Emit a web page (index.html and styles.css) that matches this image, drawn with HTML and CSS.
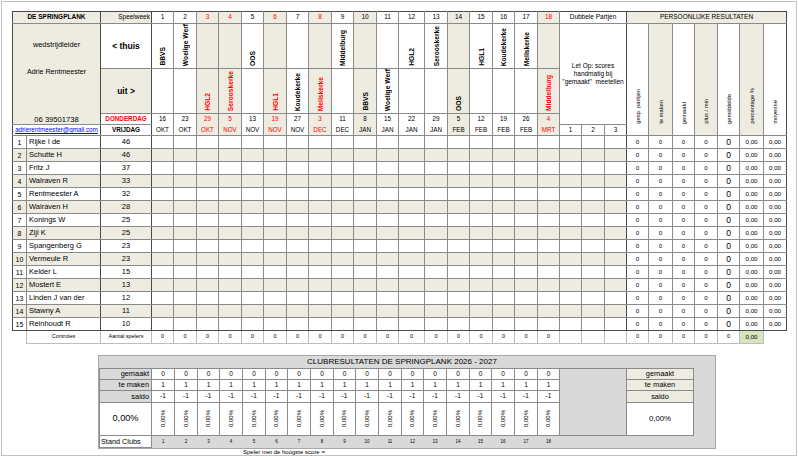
FILE: index.html
```html
<!DOCTYPE html>
<html lang="nl">
<head>
<meta charset="utf-8">
<title>De Springplank</title>
<link rel="stylesheet" href="styles.css">
</head>
<body>
<div class="page">
<table class="main">
<colgroup>
<col class="w14"><col class="w74"><col class="w51">
<col class="w22"><col class="w23"><col class="w22"><col class="w23"><col class="w22"><col class="w23"><col class="w22"><col class="w23"><col class="w22"><col class="w23"><col class="w22"><col class="w26"><col class="w23"><col class="w22"><col class="w23"><col class="w22"><col class="w23"><col class="w22">
<col class="w22"><col class="w23"><col class="w22">
<col class="w22"><col class="w24"><col class="w22"><col class="w23"><col class="w22"><col class="w24"><col class="w23">
</colgroup>
<tr class="h1">
<td colspan="2" class="bg hn lft dkr">DE SPRINGPLANK</td>
<td class="bg sw dkr">Speelweek</td>
<td>1</td><td>2</td><td class="bg rd">3</td><td class="bg rd">4</td><td>5</td><td class="bg rd">6</td><td>7</td><td class="bg rd">8</td><td>9</td><td class="bg">10</td><td>11</td><td>12</td><td>13</td><td class="bg">14</td><td>15</td><td>16</td><td>17</td><td class="bg rd">18</td>
<td colspan="3" class="dh dkr">Dubbele Partjen</td>
<td colspan="7" class="bg ph dkr">PERSOONLIJKE RESULTATEN</td>
</tr>
<tr class="h2">
<td colspan="2" rowspan="3" class="bg lead lft dkr"><div class="lead-in"><span class="l1">wedstrijdleider</span><span class="l2">Adrie Rentmeester</span><span class="l3">06 39501738</span></div></td>
<td class="th dkr">&lt; thuis</td>
<td><div class="vc"><span class="vt">BBVS</span></div></td>
<td><div class="vc"><span class="vt">Woelige Werf</span></div></td>
<td class="bg"></td><td class="bg"></td>
<td><div class="vc"><span class="vt">OOS</span></div></td>
<td class="bg"></td><td></td><td class="bg"></td>
<td><div class="vc"><span class="vt">Middelburg</span></div></td>
<td class="bg"></td><td></td>
<td><div class="vc"><span class="vt">HGL2</span></div></td>
<td><div class="vc"><span class="vt">Serooskerke</span></div></td>
<td class="bg"></td>
<td><div class="vc"><span class="vt">HGL1</span></div></td>
<td><div class="vc"><span class="vt">Koudekerke</span></div></td>
<td><div class="vc"><span class="vt">Meliskerke</span></div></td>
<td class="bg"></td>
<td colspan="3" rowspan="3" class="letop dkr">Let Op: scores<br>handmatig bij<br>"gemaakt"&nbsp; meetellen</td>
<td rowspan="4" class="pv"><div class="vl"><span class="vt2">gesp. partijen</span></div></td>
<td rowspan="4" class="pv bg"><div class="vl"><span class="vt2">te maken</span></div></td>
<td rowspan="4" class="pv"><div class="vl"><span class="vt2">gemaakt</span></div></td>
<td rowspan="4" class="pv bg"><div class="vl"><span class="vt2">plus / min</span></div></td>
<td rowspan="4" class="pv"><div class="vl"><span class="vt2">gemiddelde</span></div></td>
<td rowspan="4" class="pv bg"><div class="vl"><span class="vt2">percentage %</span></div></td>
<td rowspan="4" class="pv dkr"><div class="vl"><span class="vt2">moyenne</span></div></td>
</tr>
<tr class="h3">
<td class="bg ui dkr">uit &gt;</td>
<td></td><td></td>
<td class="bg"><div class="vc"><span class="vt rd">HGL2</span></div></td>
<td class="bg"><div class="vc"><span class="vt rd">Serooskerke</span></div></td>
<td></td>
<td class="bg"><div class="vc"><span class="vt rd">HGL1</span></div></td>
<td><div class="vc"><span class="vt">Koudekerke</span></div></td>
<td class="bg"><div class="vc"><span class="vt rd">Meliskerke</span></div></td>
<td></td>
<td class="bg"><div class="vc"><span class="vt">BBVS</span></div></td>
<td><div class="vc"><span class="vt">Woelige Werf</span></div></td>
<td></td><td></td>
<td class="bg"><div class="vc"><span class="vt">OOS</span></div></td>
<td></td><td></td><td></td>
<td class="bg"><div class="vc"><span class="vt rd">Middelburg</span></div></td>
</tr>
<tr class="h4">
<td class="dd dkr">DONDERDAG</td>
<td class="nb">16</td><td class="nb">23</td><td class="nb bg rd">29</td><td class="nb bg rd">5</td><td class="nb">13</td><td class="nb bg rd">19</td><td class="nb">27</td><td class="nb bg rd">3</td><td class="nb">11</td><td class="nb bg">8</td><td class="nb">15</td><td class="nb">22</td><td class="nb">29</td><td class="nb bg">5</td><td class="nb">12</td><td class="nb">19</td><td class="nb">26</td><td class="nb bg rd">4</td>
</tr>
<tr class="h5">
<td colspan="2" class="mail lft dkr"><span>adrierentmeester@gmail.com</span></td>
<td class="vr dkr">VRIJDAG</td>
<td>OKT</td><td>OKT</td><td class="bg rd">OKT</td><td class="bg rd">NOV</td><td>NOV</td><td class="bg rd">NOV</td><td>NOV</td><td class="bg rd">DEC</td><td>DEC</td><td class="bg">JAN</td><td>JAN</td><td>JAN</td><td>JAN</td><td class="bg">FEB</td><td>FEB</td><td>FEB</td><td>FEB</td><td class="bg rd">MRT</td>
<td class="du">1</td><td class="du">2</td><td class="du dkr">3</td>
</tr>
<tr class="r"><td class="n lft">1</td><td class="nm dkr">Rijke I de</td><td class="sc dkr">46</td><td></td><td></td><td></td><td></td><td></td><td></td><td></td><td></td><td></td><td></td><td></td><td></td><td></td><td></td><td></td><td></td><td></td><td></td><td></td><td></td><td class="dkr"></td><td class="p">0</td><td class="p">0</td><td class="p">0</td><td class="p">0</td><td class="p g">0</td><td class="p">0,00</td><td class="p dkr">0,00</td></tr>
<tr class="r a"><td class="n lft">2</td><td class="nm dkr">Schutte H</td><td class="sc dkr">46</td><td></td><td></td><td></td><td></td><td></td><td></td><td></td><td></td><td></td><td></td><td></td><td></td><td></td><td></td><td></td><td></td><td></td><td></td><td></td><td></td><td class="dkr"></td><td class="p">0</td><td class="p">0</td><td class="p">0</td><td class="p">0</td><td class="p g">0</td><td class="p">0,00</td><td class="p dkr">0,00</td></tr>
<tr class="r"><td class="n lft">3</td><td class="nm dkr">Fritz J</td><td class="sc dkr">37</td><td></td><td></td><td></td><td></td><td></td><td></td><td></td><td></td><td></td><td></td><td></td><td></td><td></td><td></td><td></td><td></td><td></td><td></td><td></td><td></td><td class="dkr"></td><td class="p">0</td><td class="p">0</td><td class="p">0</td><td class="p">0</td><td class="p g">0</td><td class="p">0,00</td><td class="p dkr">0,00</td></tr>
<tr class="r a"><td class="n lft">4</td><td class="nm dkr">Walraven R</td><td class="sc dkr">33</td><td></td><td></td><td></td><td></td><td></td><td></td><td></td><td></td><td></td><td></td><td></td><td></td><td></td><td></td><td></td><td></td><td></td><td></td><td></td><td></td><td class="dkr"></td><td class="p">0</td><td class="p">0</td><td class="p">0</td><td class="p">0</td><td class="p g">0</td><td class="p">0,00</td><td class="p dkr">0,00</td></tr>
<tr class="r"><td class="n lft">5</td><td class="nm dkr">Rentmeester A</td><td class="sc dkr">32</td><td></td><td></td><td></td><td></td><td></td><td></td><td></td><td></td><td></td><td></td><td></td><td></td><td></td><td></td><td></td><td></td><td></td><td></td><td></td><td></td><td class="dkr"></td><td class="p">0</td><td class="p">0</td><td class="p">0</td><td class="p">0</td><td class="p g">0</td><td class="p">0,00</td><td class="p dkr">0,00</td></tr>
<tr class="r a"><td class="n lft">6</td><td class="nm dkr">Walraven H</td><td class="sc dkr">28</td><td></td><td></td><td></td><td></td><td></td><td></td><td></td><td></td><td></td><td></td><td></td><td></td><td></td><td></td><td></td><td></td><td></td><td></td><td></td><td></td><td class="dkr"></td><td class="p">0</td><td class="p">0</td><td class="p">0</td><td class="p">0</td><td class="p g">0</td><td class="p">0,00</td><td class="p dkr">0,00</td></tr>
<tr class="r"><td class="n lft">7</td><td class="nm dkr">Konings W</td><td class="sc dkr">25</td><td></td><td></td><td></td><td></td><td></td><td></td><td></td><td></td><td></td><td></td><td></td><td></td><td></td><td></td><td></td><td></td><td></td><td></td><td></td><td></td><td class="dkr"></td><td class="p">0</td><td class="p">0</td><td class="p">0</td><td class="p">0</td><td class="p g">0</td><td class="p">0,00</td><td class="p dkr">0,00</td></tr>
<tr class="r a"><td class="n lft">8</td><td class="nm dkr">Zijl K</td><td class="sc dkr">25</td><td></td><td></td><td></td><td></td><td></td><td></td><td></td><td></td><td></td><td></td><td></td><td></td><td></td><td></td><td></td><td></td><td></td><td></td><td></td><td></td><td class="dkr"></td><td class="p">0</td><td class="p">0</td><td class="p">0</td><td class="p">0</td><td class="p g">0</td><td class="p">0,00</td><td class="p dkr">0,00</td></tr>
<tr class="r"><td class="n lft">9</td><td class="nm dkr">Spangenberg G</td><td class="sc dkr">23</td><td></td><td></td><td></td><td></td><td></td><td></td><td></td><td></td><td></td><td></td><td></td><td></td><td></td><td></td><td></td><td></td><td></td><td></td><td></td><td></td><td class="dkr"></td><td class="p">0</td><td class="p">0</td><td class="p">0</td><td class="p">0</td><td class="p g">0</td><td class="p">0,00</td><td class="p dkr">0,00</td></tr>
<tr class="r a"><td class="n lft">10</td><td class="nm dkr">Vermeule R</td><td class="sc dkr">23</td><td></td><td></td><td></td><td></td><td></td><td></td><td></td><td></td><td></td><td></td><td></td><td></td><td></td><td></td><td></td><td></td><td></td><td></td><td></td><td></td><td class="dkr"></td><td class="p">0</td><td class="p">0</td><td class="p">0</td><td class="p">0</td><td class="p g">0</td><td class="p">0,00</td><td class="p dkr">0,00</td></tr>
<tr class="r"><td class="n lft">11</td><td class="nm dkr">Kelder L</td><td class="sc dkr">15</td><td></td><td></td><td></td><td></td><td></td><td></td><td></td><td></td><td></td><td></td><td></td><td></td><td></td><td></td><td></td><td></td><td></td><td></td><td></td><td></td><td class="dkr"></td><td class="p">0</td><td class="p">0</td><td class="p">0</td><td class="p">0</td><td class="p g">0</td><td class="p">0,00</td><td class="p dkr">0,00</td></tr>
<tr class="r a"><td class="n lft">12</td><td class="nm dkr">Mostert E</td><td class="sc dkr">13</td><td></td><td></td><td></td><td></td><td></td><td></td><td></td><td></td><td></td><td></td><td></td><td></td><td></td><td></td><td></td><td></td><td></td><td></td><td></td><td></td><td class="dkr"></td><td class="p">0</td><td class="p">0</td><td class="p">0</td><td class="p">0</td><td class="p g">0</td><td class="p">0,00</td><td class="p dkr">0,00</td></tr>
<tr class="r"><td class="n lft">13</td><td class="nm dkr">Linden J van der</td><td class="sc dkr">12</td><td></td><td></td><td></td><td></td><td></td><td></td><td></td><td></td><td></td><td></td><td></td><td></td><td></td><td></td><td></td><td></td><td></td><td></td><td></td><td></td><td class="dkr"></td><td class="p">0</td><td class="p">0</td><td class="p">0</td><td class="p">0</td><td class="p g">0</td><td class="p">0,00</td><td class="p dkr">0,00</td></tr>
<tr class="r a"><td class="n lft">14</td><td class="nm dkr">Stawny A</td><td class="sc dkr">11</td><td></td><td></td><td></td><td></td><td></td><td></td><td></td><td></td><td></td><td></td><td></td><td></td><td></td><td></td><td></td><td></td><td></td><td></td><td></td><td></td><td class="dkr"></td><td class="p">0</td><td class="p">0</td><td class="p">0</td><td class="p">0</td><td class="p g">0</td><td class="p">0,00</td><td class="p dkr">0,00</td></tr>
<tr class="r last"><td class="n lft">15</td><td class="nm dkr">Reinhoudt R</td><td class="sc dkr">10</td><td></td><td></td><td></td><td></td><td></td><td></td><td></td><td></td><td></td><td></td><td></td><td></td><td></td><td></td><td></td><td></td><td></td><td></td><td></td><td></td><td class="dkr"></td><td class="p">0</td><td class="p">0</td><td class="p">0</td><td class="p">0</td><td class="p g">0</td><td class="p">0,00</td><td class="p dkr">0,00</td></tr>
<tr class="r ctl">
<td class="nob"></td><td class="cl first">Controles</td><td class="cl">Aantal spelers</td>
<td>0</td><td>0</td><td>0</td><td>0</td><td>0</td><td>0</td><td>0</td><td>0</td><td>0</td><td>0</td><td>0</td><td>0</td><td>0</td><td>0</td><td>0</td><td>0</td><td>0</td><td>0</td>
<td></td><td></td><td></td>
<td>0</td><td>0</td><td>0</td><td>0</td><td>0</td><td class="grn">0,00</td><td class="nob"></td>
</tr>
</table>

<div class="club">
<div class="club-title">CLUBRESULTATEN DE SPRINGPLANK 2026 - 2027</div>
<table class="ct">
<colgroup>
<col class="w52">
<col class="w23"><col class="w23"><col class="w22"><col class="w23"><col class="w23"><col class="w22"><col class="w23"><col class="w23"><col class="w22"><col class="w23"><col class="w23"><col class="w22"><col class="w23"><col class="w23"><col class="w22"><col class="w23"><col class="w23"><col class="w22">
<col class="w67"><col class="w67">
</colgroup>
<tr class="c1"><td class="lab">gemaakt</td><td>0</td><td>0</td><td>0</td><td>0</td><td>0</td><td>0</td><td>0</td><td>0</td><td>0</td><td>0</td><td>0</td><td>0</td><td>0</td><td>0</td><td>0</td><td>0</td><td>0</td><td>0</td><td class="gbox" rowspan="4"></td><td class="rb">gemaakt</td></tr>
<tr class="c2"><td class="lab">te maken</td><td>1</td><td>1</td><td>1</td><td>1</td><td>1</td><td>1</td><td>1</td><td>1</td><td>1</td><td>1</td><td>1</td><td>1</td><td>1</td><td>1</td><td>1</td><td>1</td><td>1</td><td>1</td><td class="rb">te maken</td></tr>
<tr class="c3"><td class="lab">saldo</td><td>-1</td><td>-1</td><td>-1</td><td>-1</td><td>-1</td><td>-1</td><td>-1</td><td>-1</td><td>-1</td><td>-1</td><td>-1</td><td>-1</td><td>-1</td><td>-1</td><td>-1</td><td>-1</td><td>-1</td><td>-1</td><td class="rb">saldo</td></tr>
<tr class="c4"><td class="pct">0,00%</td>
<td><div class="vc2"><span class="vt3">0,00%</span></div></td><td><div class="vc2"><span class="vt3">0,00%</span></div></td><td><div class="vc2"><span class="vt3">0,00%</span></div></td><td><div class="vc2"><span class="vt3">0,00%</span></div></td><td><div class="vc2"><span class="vt3">0,00%</span></div></td><td><div class="vc2"><span class="vt3">0,00%</span></div></td><td><div class="vc2"><span class="vt3">0,00%</span></div></td><td><div class="vc2"><span class="vt3">0,00%</span></div></td><td><div class="vc2"><span class="vt3">0,00%</span></div></td><td><div class="vc2"><span class="vt3">0,00%</span></div></td><td><div class="vc2"><span class="vt3">0,00%</span></div></td><td><div class="vc2"><span class="vt3">0,00%</span></div></td><td><div class="vc2"><span class="vt3">0,00%</span></div></td><td><div class="vc2"><span class="vt3">0,00%</span></div></td><td><div class="vc2"><span class="vt3">0,00%</span></div></td><td><div class="vc2"><span class="vt3">0,00%</span></div></td><td><div class="vc2"><span class="vt3">0,00%</span></div></td><td><div class="vc2"><span class="vt3">0,00%</span></div></td>
<td class="rpct">0,00%</td></tr>
<tr class="c5"><td class="stand">Stand Clubs</td><td class="sn">1</td><td class="sn">2</td><td class="sn">3</td><td class="sn">4</td><td class="sn">5</td><td class="sn">6</td><td class="sn">7</td><td class="sn">8</td><td class="sn">9</td><td class="sn">10</td><td class="sn">11</td><td class="sn">12</td><td class="sn">13</td><td class="sn">14</td><td class="sn">15</td><td class="sn">16</td><td class="sn">17</td><td class="sn">18</td><td class="sn"></td><td class="sn"></td></tr>
</table>
</div>
<div class="speler">Speler met de hoogste score =</div>
</div>
</body>
</html>
```
FILE: styles.css
```css
* { box-sizing: border-box; }
body { margin: 0; font-family: "Liberation Sans", Arial, sans-serif; color: #000; background: #fff; }

.page { margin: 1px 0 0 1px; width: 796px; height: 455px; border: 1px solid #c2c2c2; padding: 9px 0 0 10px; overflow: hidden; }

.w14 { width: 14px; } .w22 { width: 22px; } .w23 { width: 23px; } .w24 { width: 24px; } .w26 { width: 26px; }
.w51 { width: 51px; } .w52 { width: 52px; } .w67 { width: 67px; } .w74 { width: 74px; }

.main { border-collapse: collapse; table-layout: fixed; width: 774px; }
.main td { border: 0 solid #8a8a8a; border-right-width: 1px; border-bottom-width: 1px; padding: 0; text-align: center; vertical-align: middle; font-size: 6.4px; line-height: 1; white-space: nowrap; overflow: hidden; }
.main td.lft { border-left: 1px solid #4a4a4a; }
.main td.dkr { border-right-color: #4a4a4a; }
.main .h1 td { border-top: 1px solid #4a4a4a; height: 12px; font-size: 6.5px; }
.main .h2 td, .main .h3 td { height: 45px; }
.main .h4 td, .main .h5 td { height: 11px; font-size: 6.3px; }
.main .h4 td.nb { border-bottom-width: 0; }
.main .last td { border-bottom-color: #4a4a4a; }

.bg { background: #eeece1; }
.main .rd { color: #f00; }

.main .hn { font-weight: bold; font-size: 6.2px; }
.main .sw { text-align: right; padding-right: 1px; font-size: 7.5px; }
.main .dh { font-size: 5.9px; }
.main .ph { font-size: 5.5px; }
.main .th, .main .ui { font-weight: bold; font-size: 8.5px; }
.main .dd { font-weight: bold; font-size: 5.6px; color: #f00; }
.main .vr { font-weight: bold; font-size: 6.1px; }
.main .mail { font-size: 5.3px; color: #00f; }
.main .mail span { text-decoration: underline; }
.main .du { font-size: 6px; }

.lead { vertical-align: top !important; }
.lead-in { height: 100px; display: flex; flex-direction: column; align-items: center; padding-top: 17px; }
.l1 { font-size: 7.4px; line-height: 8px; }
.l2 { font-size: 7.1px; line-height: 8px; margin-top: 19px; }
.l3 { font-size: 7.6px; line-height: 9px; margin-top: auto; }

.vc { height: 44px; display: flex; align-items: flex-end; justify-content: center; padding-bottom: 2px; }
.vt { writing-mode: vertical-rl; transform: rotate(180deg); font-weight: bold; font-size: 6.7px; line-height: 7px; white-space: nowrap; }

.main .letop { white-space: normal; font-size: 6.5px; line-height: 7.8px; }

.main td.pv { vertical-align: bottom; }
.vl { height: 111px; display: flex; align-items: flex-end; justify-content: center; padding-bottom: 11px; }
.vt2 { writing-mode: vertical-rl; transform: rotate(180deg); font-size: 5.8px; line-height: 6px; white-space: nowrap; }

.main .r td { height: 13px; }
.main .r.a td { background: #eeece1; }
.main .r.a td.p { background: #fff; }
.main .n { font-size: 7px; }
.main .nm { text-align: left; padding-left: 2px; font-size: 7.5px; }
.main .sc { font-size: 7.5px; }
.main .p { font-size: 6.2px; }
.main .p.g { font-size: 8.5px; }

.main .ctl td { border-color: #bdbdbd; font-size: 5.6px; }
.main .ctl td.first { border-left: 1px solid #bdbdbd; }
.main .ctl td.cl { font-size: 5.5px; }
.main .ctl td.nob { border-width: 0; }
.main .ctl td.grn { background: #d7e4bd; font-size: 6.2px; }

.club { margin: 11px 0 0 86px; width: 618px; background: #d9d9d9; border: 1px solid #a8a8a8; }
.club-title { height: 12px; line-height: 12px; font-size: 8px; text-align: center; padding-right: 10px; }
.ct { border-collapse: collapse; table-layout: fixed; width: 594px; }
.ct td { border: 0 solid #8a8a8a; border-right-width: 1px; border-bottom-width: 1px; padding: 0; text-align: center; vertical-align: middle; font-size: 6.5px; line-height: 1; background: #fff; white-space: nowrap; overflow: hidden; }
.ct .c1 td { border-top-width: 1px; height: 11px; }
.ct .c2 td { height: 11px; }
.ct .c3 td { height: 12px; }
.ct .c4 td { height: 33px; }
.ct .c5 td { height: 12px; }
.ct td.lab { background: #d9d9d9; text-align: right; padding-right: 2px; font-size: 7.4px; border-left-width: 1px; }
.ct td.pct { font-size: 9.2px; border-left-width: 1px; }
.ct td.stand { text-align: left; padding-left: 1px; font-size: 7.3px; border-left-width: 1px; }
.ct td.sn { background: transparent; border-width: 0; font-size: 4.5px; }
.ct td.gbox { background: #d9d9d9; }
.ct td.rb { background: #eeece1; font-size: 7.4px; }
.ct td.rpct { font-size: 7.8px; }
.vc2 { height: 32px; display: flex; align-items: center; justify-content: center; }
.vt3 { writing-mode: vertical-rl; transform: rotate(180deg); font-size: 6px; line-height: 7px; white-space: nowrap; }

.speler { margin: 0 0 0 231px; font-size: 6px; line-height: 7px; }
```
